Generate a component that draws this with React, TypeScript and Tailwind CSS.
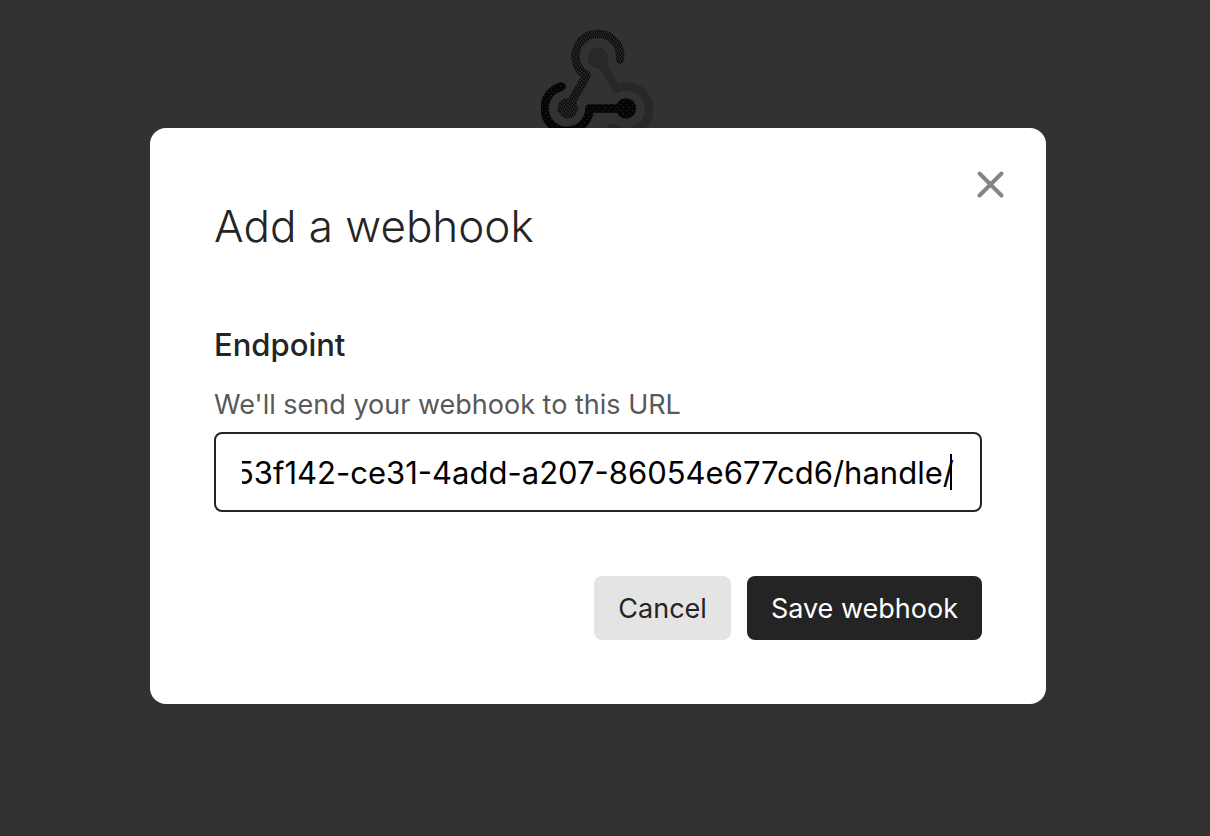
import { useLayoutEffect, useRef, useState } from "react";

function WebhookLogo() {
  return (
    <svg
      className="h-[112px] w-[116px]"
      viewBox="540 27 116 112"
      fill="none"
      strokeWidth="8.6"
      strokeLinejoin="round"
      aria-hidden="true"
    >
      <defs>
        <pattern id="dense" width="4" height="4" patternUnits="userSpaceOnUse">
          <rect width="4" height="4" fill="#252525" />
          <path
            fill="#050505"
            d="M0 0h1v1h-1zM2 0h1v1h-1zM1 1h1v1h-1zM3 2h1v1h-1zM0 3h1v1h-1zM2 2h1v1h-1z"
          />
        </pattern>
        <pattern id="sparse" width="6" height="6" patternUnits="userSpaceOnUse">
          <rect width="6" height="6" fill="#060606" />
          <rect x="1" y="1" width="1" height="1" fill="#252525" />
          <rect x="4" y="4" width="1" height="1" fill="#252525" />
        </pattern>
      </defs>
      <g stroke="#282828">
        <path d="M597 57L615.500 87.500A23 23 0 1 1 611 126.500" strokeLinecap="round" />
        <circle cx="597" cy="56.7" r="10.3" fill="#282828" stroke="none" />
      </g>
      <g stroke="url(#dense)">
        <path d="M619 58.500A22.4 22.4 0 1 0 585.500 74.500L567 107" strokeLinecap="round" />
        <circle cx="566.8" cy="107.2" r="10.3" fill="url(#dense)" stroke="none" />
      </g>
      <g stroke="url(#sparse)">
        <path d="M560.500 85.500A22.5 22.5 0 1 0 588.500 107.500H625" strokeLinecap="round" />
        <circle cx="625" cy="107.500" r="10.3" fill="url(#sparse)" stroke="none" />
      </g>
    </svg>
  );
}

export default function App() {
  const inputRef = useRef<HTMLInputElement>(null);
  const [endpoint, setEndpoint] = useState("53f142-ce31-4add-a207-86054e677cd6/handle/");

  useLayoutEffect(() => {
    const input = inputRef.current;
    if (input) input.scrollLeft = input.scrollWidth;
  }, [endpoint]);

  return (
    <div className="relative min-h-screen bg-[#323232] font-['Inter',sans-serif] text-[#242424]">
      <div className="flex justify-center pt-7 pr-3">
        <WebhookLogo />
      </div>
      <div className="absolute inset-0 flex items-center justify-center pr-3.5 pb-1">
        <section
          role="dialog"
          aria-modal="true"
          aria-labelledby="dialog-title"
          className="relative w-full max-w-4xl rounded-2xl bg-white px-16 pt-[68px] pb-16"
        >
          <button
            type="button"
            aria-label="Close"
            className="absolute top-10 right-10 flex size-8 items-center justify-center text-[#858585]"
          >
            <svg className="size-8" viewBox="0 0 32 32" stroke="currentColor" strokeWidth="4" strokeLinecap="round" aria-hidden="true">
              <path d="M5.500 5.500L27.500 27.500M27.500 5.500L5.500 27.500" />
            </svg>
          </button>
          <h1 id="dialog-title" className="text-[44px] leading-[60px] font-light">
            Add a webhook
          </h1>
          <form className="mt-[65px]" onSubmit={(event) => event.preventDefault()}>
            <label htmlFor="endpoint" className="block text-[31px] leading-[48px] font-medium">
              Endpoint
            </label>
            <p id="endpoint-hint" className="mt-4 text-[27px] leading-10 text-[#595959]">
              We'll send your webhook to this URL
            </p>
            <div className="relative mt-[7px]">
              <input
                ref={inputRef}
                id="endpoint"
                type="text"
                aria-describedby="endpoint-hint"
                value={endpoint}
                onChange={(event) => setEndpoint(event.target.value)}
                className="block h-20 w-full rounded-lg border-2 border-[#242424] bg-white px-[26px] text-[31px] text-black caret-transparent outline-none"
              />
              <span className="absolute top-[22px] right-[30px] h-9 w-0.5 bg-black" aria-hidden="true" />
            </div>
            <div className="mt-16 flex justify-end gap-4">
              <button type="button" className="h-16 rounded-lg bg-[#e4e4e4] px-6 pt-0.5 text-[27px]">
                Cancel
              </button>
              <button type="submit" className="h-16 rounded-lg bg-[#242424] px-6 pt-0.5 text-[27px] text-white">
                Save webhook
              </button>
            </div>
          </form>
        </section>
      </div>
    </div>
  );
}
